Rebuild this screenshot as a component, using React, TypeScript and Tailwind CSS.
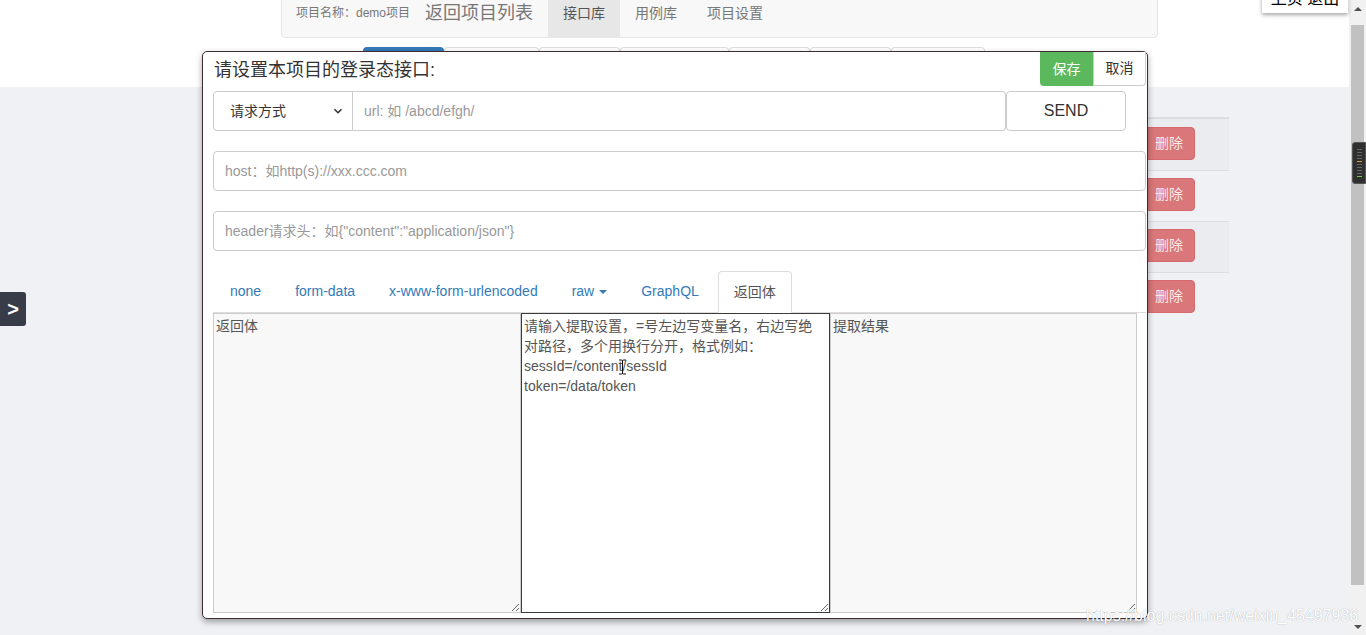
import React from 'react';

const BEHIND_TABS = [81, 95, 81, 109, 81, 81, 94];

const BODY_TABS = ['none', 'form-data', 'x-www-form-urlencoded', 'raw', 'GraphQL'];

const EXTRACT_TEXT =
  '请输入提取设置，=号左边写变量名，右边写绝\n对路径，多个用换行分开，格式例如：\nsessId=/content/sessId\ntoken=/data/token';

// table rows that peek out from behind the dialog
const RowsBehind: React.FC = () => (
  <div className="ml-[300px] w-[929px] mt-[30px] border-t-2 border-[#dddde0]">
    {[0, 1, 2, 3].map((i) => (
      <div
        key={i}
        className={`h-[51px] flex items-start justify-end pr-[34px] ${
          i > 0 ? 'border-t border-[#dcdde1] pt-[7px]' : 'pt-[8px]'
        } ${i % 2 === 0 ? 'bg-[#ebecf0]' : ''}`}
      >
        <div className="w-[64px] h-[33px] rounded-[4px] bg-[#d9777a] border border-[#d6696c] text-[#fbeaea] text-[14px] flex items-center justify-center pl-[12px]">
          删除
        </div>
      </div>
    ))}
  </div>
);

const Scrollbar: React.FC = () => (
  <div className="w-[17px] h-full bg-[#f1f1f1] flex flex-col items-center">
    <div className="h-[17px] w-full flex items-center justify-center">
      <div className="w-0 h-0 border-x-[4px] border-x-transparent border-b-[4px] border-b-[#505050]" />
    </div>
    <div className="mt-[8px] w-[13px] h-[560px] bg-[#c1c1c1]" />
    <div className="flex-1" />
    <div className="h-[17px] w-full flex items-center justify-center">
      <div className="w-0 h-0 border-x-[4px] border-x-transparent border-t-[4px] border-t-[#505050]" />
    </div>
  </div>
);

const LoginApiDialog: React.FC = () => (
  <div className="absolute left-[202px] top-[51px] w-[946px] h-[568px] bg-white border border-[#3e2c31] rounded-[5px] shadow-[0_3px_6px_rgba(0,0,0,0.35)]">
    {/* header */}
    <div className="flex justify-between h-[34px]">
      <div className="pl-[11px] pt-[6px] text-[18px] leading-[24px] text-[#333]">请设置本项目的登录态接口:</div>
      <div className="flex mr-[1px]">
        <div className="w-[53px] h-[34px] bg-[#5cb85c] text-white text-[14px] rounded-bl-[4px] flex items-center justify-center">
          保存
        </div>
        <div className="w-[53px] h-[34px] bg-white border border-t-0 border-[#ccc] rounded-br-[4px] text-[#333] text-[14px] flex items-center justify-center">
          取消
        </div>
      </div>
    </div>

    {/* method + url + send */}
    <div className="flex ml-[10px] mt-[5px] h-[40px]">
      <div className="w-[140px] h-full border border-[#ccc] rounded-l-[4px] flex items-center justify-between pl-[16px] pr-[9px] text-[14px] text-[#333]">
        <span>请求方式</span>
        <svg width="10" height="10" viewBox="0 0 10 10">
          <path d="M1.5 3.2 L5 6.7 L8.5 3.2" fill="none" stroke="#333" strokeWidth="1.6" />
        </svg>
      </div>
      <div className="w-[653px] h-full border border-l-0 border-[#ccc] rounded-r-[4px] flex items-center pl-[11px] text-[14px] text-[#999]">
        url: 如 /abcd/efgh/
      </div>
      <div className="w-[120px] h-full border border-[#ccc] rounded-[4px] flex items-center justify-center text-[16px] text-[#333]">
        SEND
      </div>
    </div>

    <div className="ml-[10px] mt-[20px] w-[933px] h-[40px] border border-[#ccc] rounded-[4px] flex items-center pl-[11px] text-[14px] text-[#999]">
      host：如http(s)://xxx.ccc.com
    </div>

    <div className="ml-[10px] mt-[20px] w-[933px] h-[40px] border border-[#ccc] rounded-[4px] flex items-center pl-[11px] text-[14px] text-[#999]">
      header请求头：如{'{"content":"application/json"}'}
    </div>

    {/* body tabs */}
    <div className="ml-[10px] mt-[20px] w-[933px] h-[42px] border-b border-[#ddd] flex items-end gap-[4px] pl-[2px]">
      {BODY_TABS.map((t) => (
        <div key={t} className="h-[41px] px-[15px] flex items-center text-[14px] text-[#337ab7]">
          {t}
          {t === 'raw' && (
            <span className="ml-[5px] inline-block w-0 h-0 border-x-[4px] border-x-transparent border-t-[4px] border-t-[#337ab7]" />
          )}
        </div>
      ))}
      <div className="h-[42px] -mb-px px-[15px] flex items-center text-[14px] text-[#555] bg-white border border-[#ddd] border-b-white rounded-t-[4px]">
        返回体
      </div>
    </div>

    {/* three text areas */}
    <div className="relative flex ml-[10px] h-[300px]">
      <textarea
        readOnly
        value="返回体"
        className="w-[308px] h-full bg-[#f8f8f8] border border-[#ccc] p-[2px] text-[14px] leading-[20px] text-[#555] outline-none overflow-hidden"
      />
      <textarea
        readOnly
        wrap="off"
        value={EXTRACT_TEXT}
        className="w-[309px] h-full bg-white border border-[#3a3a3a] p-[2px] text-[14px] leading-[20px] text-[#555] outline-none overflow-hidden"
      />
      <textarea
        readOnly
        value="提取结果"
        className="w-[307px] h-full bg-[#f8f8f8] border border-[#ccc] p-[2px] text-[14px] leading-[20px] text-[#555] outline-none overflow-hidden"
      />
      {/* mouse I-beam */}
      <svg className="absolute left-[405px] top-[46px]" width="9" height="16" viewBox="0 0 9 16">
        <path d="M1 1 H3.5 M5.5 1 H8 M4.5 1.5 V14.5 M1 15 H3.5 M5.5 15 H8 M3.5 1 Q4.5 1 4.5 2 M5.5 1 Q4.5 1 4.5 2 M3.5 15 Q4.5 15 4.5 14 M5.5 15 Q4.5 15 4.5 14" fill="none" stroke="#111" strokeWidth="1" />
      </svg>
    </div>
  </div>
);

export default function App() {
  return (
    <div className="relative w-[1366px] h-[635px] overflow-hidden flex font-['Liberation_Sans','Noto_Sans_CJK_SC',sans-serif]">
      <div className="w-[1349px] h-full flex flex-col">
        {/* white top strip */}
        <div className="h-[87px] bg-white">
          <div className="ml-[281px] -mt-[12px] w-[877px] h-[50px] bg-[#f8f8f8] border border-[#e7e7e7] rounded-[4px] flex items-center text-[#777]">
            <span className="pl-[14px] text-[12px]">项目名称：demo项目</span>
            <span className="ml-[15px] text-[18px]">返回项目列表</span>
            <div className="ml-[15px] h-full px-[15px] bg-[#e7e7e7] text-[#555] text-[14px] flex items-center">接口库</div>
            <div className="h-full px-[15px] text-[14px] flex items-center">用例库</div>
            <div className="h-full px-[15px] text-[14px] flex items-center">项目设置</div>
          </div>
          <div className="ml-[363px] mt-[9px] flex">
            {BEHIND_TABS.map((w, i) => (
              <div
                key={i}
                style={{ width: w }}
                className={`h-[40px] rounded-t-[4px] ${
                  i === 0 ? 'bg-[#337ab7]' : 'border border-b-0 border-[#ddd]'
                }`}
              />
            ))}
          </div>
        </div>
        <div className="flex-1 bg-[#f0f1f5]">
          <RowsBehind />
        </div>
      </div>
      <Scrollbar />

      {/* floating bits */}
      <div className="absolute left-[1262px] top-[-13px] w-[86px] h-[26px] bg-white shadow-[0_2px_4px_rgba(0,0,0,0.35)] text-[16px] leading-[24px] text-black text-center">
        上页 退出
      </div>
      <div className="absolute right-0 top-[142px] w-[14px] h-[42px] bg-[#303030] border border-[#555] rounded-l-[3px] flex flex-col items-center pt-[6px] gap-[2px]">
        {['#666', '#666', '#666', '#666', '#e0a030', '#666', '#666', '#666', '#666', '#5fd040'].map((c, i) => (
          <div key={i} style={{ backgroundColor: c }} className="w-[5px] h-px" />
        ))}
      </div>
      <div className="absolute left-0 top-[292px] w-[26px] h-[34px] bg-[#383b48] rounded-r-[3px] text-white text-[20px] font-bold flex items-center justify-center">
        &gt;
      </div>

      <LoginApiDialog />

      <div className="absolute left-[1086px] top-[604px] text-[16px] text-white [text-shadow:0_0_1px_rgba(0,0,0,0.35)]">
        https://blog.csdn.net/weixin_45497936
      </div>
    </div>
  );
}
